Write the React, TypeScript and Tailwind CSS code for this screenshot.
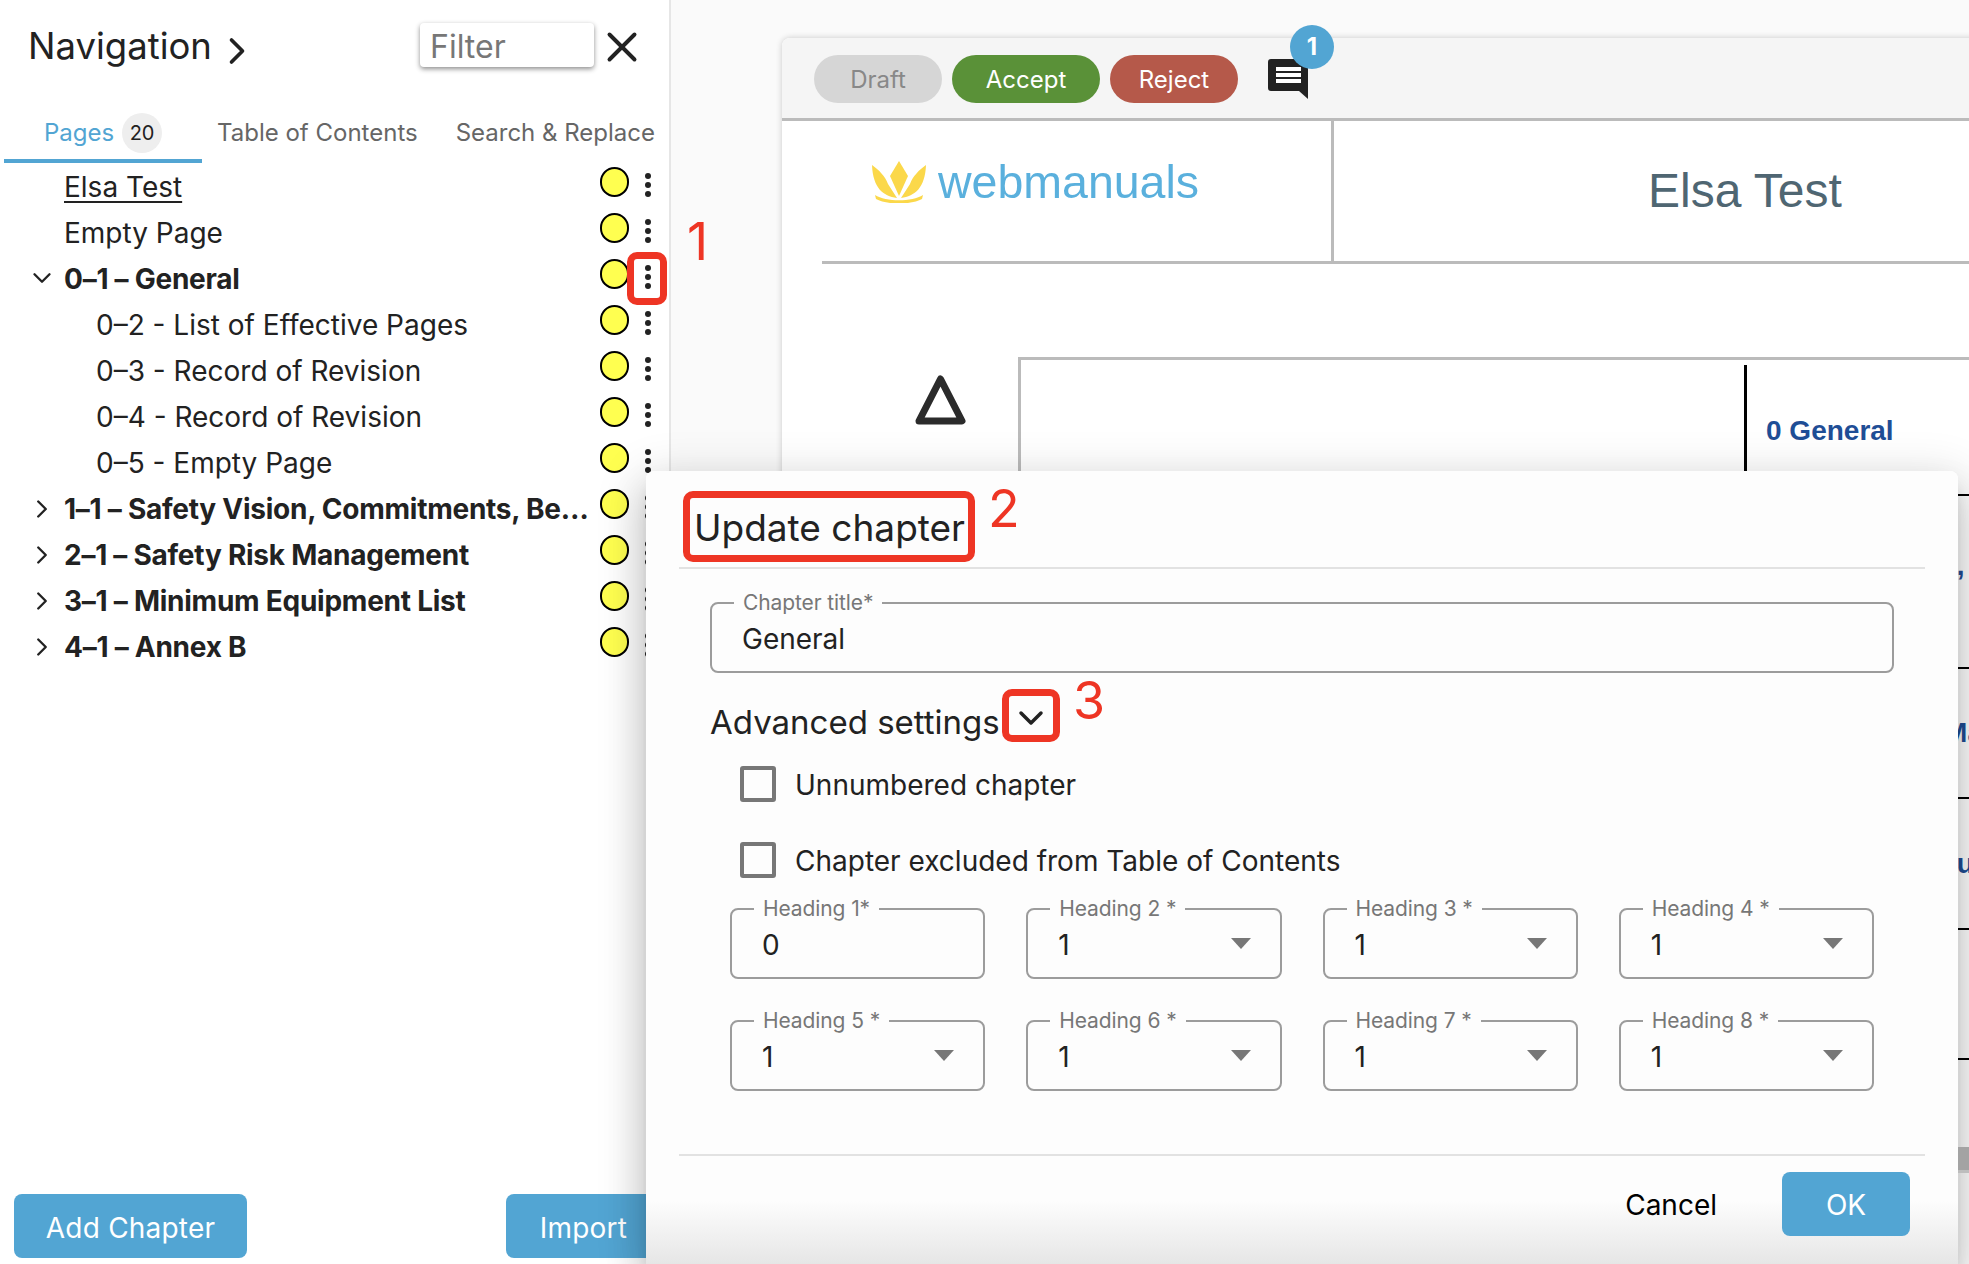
import { ChevronDown, ChevronRight, X } from 'lucide-react';

const pages = [
  { label: 'Elsa Test', level: 0, underline: true },
  { label: 'Empty Page', level: 0 },
  { label: '0–1 – General', level: 0, bold: true, arrow: 'down' },
  { label: '0–2 - List of Effective Pages', level: 1 },
  { label: '0–3 - Record of Revision', level: 1 },
  { label: '0–4 - Record of Revision', level: 1 },
  { label: '0–5 - Empty Page', level: 1 },
  { label: '1–1 – Safety Vision, Commitments, Beliefs and Values', level: 0, bold: true, arrow: 'right' },
  { label: '2–1 – Safety Risk Management', level: 0, bold: true, arrow: 'right' },
  { label: '3–1 – Minimum Equipment List', level: 0, bold: true, arrow: 'right' },
  { label: '4–1 – Annex B', level: 0, bold: true, arrow: 'right' },
];

const headings = ['Heading 1*', 'Heading 2 *', 'Heading 3 *', 'Heading 4 *', 'Heading 5 *', 'Heading 6 *', 'Heading 7 *', 'Heading 8 *'];

function PageRow({ page }: { page: (typeof pages)[number] }) {
  return (
    <div className={`relative flex h-[46px] items-center pr-[18px] ${page.level === 1 ? 'pl-[96px]' : 'pl-[64px]'}`}>
      {page.arrow === 'down' && <ChevronDown size={30} strokeWidth={1.9} className="absolute left-[27px] top-[7px] text-[#222]" />}
      {page.arrow === 'right' && <ChevronRight size={30} strokeWidth={1.9} className="absolute left-[27px] top-[8px] text-[#222]" />}
      <span className={`flex-1 truncate text-[28px] text-[#222] ${page.bold ? 'font-bold tracking-[-0.25px]' : 'font-normal'} ${page.underline ? 'underline underline-offset-4' : ''}`}>
        {page.label}
      </span>
      <span className="mb-[10px] ml-[9px] h-[30px] w-[29px] shrink-0 rounded-full border-2 border-black bg-[#ffff50]" />
      <span className="mb-[4px] ml-[16px] flex shrink-0 flex-col gap-[3px]">
        <span className="h-[6px] w-[6px] rounded-full bg-[#222]" />
        <span className="h-[6px] w-[6px] rounded-full bg-[#222]" />
        <span className="h-[6px] w-[6px] rounded-full bg-[#222]" />
      </span>
    </div>
  );
}

function Sidebar() {
  return (
    <aside className="flex h-full w-[671px] shrink-0 flex-col border-r-2 border-[#e6e6e6] bg-white">
      <div className="mt-[23px] flex h-[44px] items-center pl-[28px] pr-[22px]">
        <span className="mt-[2px] text-[36.5px] leading-none text-[#222]">Navigation</span>
        <ChevronRight size={44} strokeWidth={2} className="ml-[3px] mt-[12px] text-[#222]" />
        <div className="ml-auto flex h-[44px] w-[174px] items-center rounded-[4px] bg-white pl-[10px] pt-[3px] text-[32px] text-[#777] shadow-[0_2px_5px_rgba(0,0,0,0.45)]">Filter</div>
        <X size={50} strokeWidth={1.9} className="ml-[3px] mt-[3px] text-[#222]" />
      </div>

      <div className="mt-[44px] flex h-[52px] items-center text-[24px] text-[#666]">
        <div className="ml-[4px] flex h-full w-[198px] items-center justify-center gap-[8px] border-b-4 border-[#52a5d3] pb-[4px] text-[#52a5d3]">
          Pages
          <span className="flex h-[40px] w-[40px] items-center justify-center rounded-full bg-[#eeeeee] text-[20px] text-[#222]">20</span>
        </div>
        <span className="ml-[15px] pb-[8px]">Table of Contents</span>
        <span className="ml-[38px] whitespace-nowrap pb-[8px]">Search &amp; Replace</span>
      </div>

      <div className="mt-px">
        {pages.map((page) => (
          <PageRow key={page.label} page={page} />
        ))}
      </div>

      <div className="mb-[6px] mt-auto flex pl-[14px]">
        <button className="h-[64px] w-[233px] rounded-[8px] bg-[#52a5d3] pt-[3px] text-[28px] tracking-[0.2px] text-white">Add Chapter</button>
        <button className="ml-[259px] h-[64px] w-[154px] rounded-[8px] bg-[#52a5d3] pl-[1px] pt-[3px] text-[28px] tracking-[0.2px] text-white">Import</button>
      </div>
    </aside>
  );
}

function DocumentCard() {
  return (
    <div className="h-full w-full rounded-tl-[8px] bg-white shadow-[0_0_6px_rgba(0,0,0,0.2)] [font-family:'Liberation_Sans',Arial,sans-serif]">
      <div className="flex h-[83px] items-start rounded-tl-[8px] border-b-[3px] border-[#bbbbbb] bg-[#f5f5f5] pl-[32px] pt-[17px] [font-family:Inter,sans-serif]">
        <span className="flex h-[48px] w-[128px] items-center justify-center rounded-[24px] bg-[#d6d6d6] pt-[2px] text-[24px] text-[#888]">Draft</span>
        <span className="ml-[10px] flex h-[48px] w-[148px] items-center justify-center rounded-[24px] bg-[#5a9138] pt-[2px] text-[24px] text-white">Accept</span>
        <span className="ml-[10px] flex h-[48px] w-[128px] items-center justify-center rounded-[24px] bg-[#b5594a] pt-[2px] text-[24px] text-white">Reject</span>
        <div className="relative ml-[30px] mt-[4px] h-[40px] w-[40px]">
          <svg width="40" height="40" viewBox="0 0 40 40">
            <path d="M3 0H37a3 3 0 0 1 3 3V40L31 32H3a3 3 0 0 1-3-3V3a3 3 0 0 1 3-3Z" fill="#222" />
            <rect x="8" y="8" width="25" height="4" fill="#fff" />
            <rect x="8" y="14" width="25" height="4" fill="#fff" />
            <rect x="8" y="20" width="25" height="4" fill="#fff" />
          </svg>
          <span className="absolute left-[22px] top-[-34px] flex h-[44px] w-[44px] items-center justify-center rounded-full bg-[#52a5d3] text-[24px] font-bold text-white">1</span>
        </div>
      </div>

      <div className="ml-[40px] flex h-[143px] border-b-[3px] border-[#bbbbbb]">
        <div className="flex w-[512px] items-start border-r-[3px] border-[#bbbbbb] pl-[50px] pt-[40px]">
          <svg width="54" height="42" viewBox="0 0 54 42" className="blur-[0.6px]">
            <path d="M27 0L36 15L27 35L18 15Z" fill="#fbd84a" />
            <path d="M0 4C7 9 13 15 16 23L25 37C11 35 1 27 0 4Z" fill="#fbd84a" />
            <path d="M54 4C47 9 41 15 38 23L29 37C43 35 53 27 54 4Z" fill="#fbd84a" />
            <path d="M3 34C14 41 40 41 51 34L50 38C40 44 14 44 4 38Z" fill="#fbd84a" />
          </svg>
          <span className="ml-[12px] mt-[-13px] text-[46.5px] text-[#5ab0dd] blur-[0.6px]">webmanuals</span>
        </div>
        <div className="flex-1 whitespace-nowrap pl-[314px] pt-[44px] text-[48px] leading-[52px] text-[#4f6672]">Elsa Test</div>
      </div>

      <div className="ml-[40px] flex pt-[93px]">
        <div className="w-[196px] shrink-0 pl-[93px] pt-[17px]">
          <svg width="51" height="51" viewBox="0 0 51 51">
            <path d="M25.5 5L47 47H4Z" fill="none" stroke="#2b2b2b" strokeWidth="7" strokeLinejoin="round" />
          </svg>
        </div>
        <div className="flex-1 border-l-[3px] border-t-[3px] border-[#bbbbbb] pt-[5px]">
          <div className="ml-[723px] whitespace-nowrap border-l-[3px] border-black text-[28px] font-bold text-[#1f4e96]">
            <div className="flex h-[129px] items-center pl-[19px] pt-[2px]">0 General</div>
            <div className="flex h-[173px] flex-col justify-center border-t-2 border-black pl-[11px] leading-[32px]">
              <span>1 Safety Vision,</span>
              <span>Commitments</span>
            </div>
            <div className="flex h-[130px] items-center border-t-2 border-black pl-[15px]">2 Safety Risk Management</div>
            <div className="flex h-[131px] items-center border-t-2 border-black pl-[20px]">3 Minimum Equipment List</div>
            <div className="flex h-[130px] items-center border-t-2 border-black" />
            <div className="flex h-[130px] items-center border-t-2 border-black" />
          </div>
        </div>
      </div>
    </div>
  );
}

function Field({ label, value, select }: { label: string; value: string; select?: boolean }) {
  return (
    <div className="relative flex h-[71px] items-center rounded-[8px] border-2 border-[#9c9c9c] pl-[30px] pr-[29px] text-[28px] text-[#222]">
      <span className="absolute left-[22px] top-[-13px] whitespace-nowrap bg-[#fdfdfd] px-[9px] text-[21px] leading-[24px] tracking-[-0.1px] text-[#777]">{label}</span>
      <span className="mt-[2px]">{value}</span>
      {select && (
        <svg width="20" height="11" viewBox="0 0 20 11" className="ml-auto">
          <path d="M0 0H20L10 11Z" fill="#777" />
        </svg>
      )}
    </div>
  );
}

function CheckRow({ label }: { label: string }) {
  return (
    <div className="flex items-center">
      <span className="h-[36px] w-[36px] rounded-[3px] border-4 border-[#777]" />
      <span className="ml-[19px] pt-[3px] text-[28px] text-[#222]">{label}</span>
    </div>
  );
}

function UpdateDialog() {
  return (
    <div className="absolute left-[646px] top-[471px] h-[793px] w-[1312px] rounded-t-[8px] bg-[linear-gradient(to_bottom,#fdfdfd_92%,#e6e6e6_100%)] px-[33px] shadow-[0_11px_15px_-7px_rgba(0,0,0,0.2),0_24px_38px_3px_rgba(0,0,0,0.14),0_9px_46px_8px_rgba(0,0,0,0.12)]">
      <div className="flex h-[98px] items-center border-b-2 border-[#e2e2e2] pl-[15px] pt-[18px] text-[37px] text-[#222]">Update chapter</div>

      <div className="pl-[31px] pr-[31px] pt-[33px]">
        <Field label="Chapter title*" value="General" />
      </div>

      <div className="mt-[29px] flex items-center pl-[31px] text-[33px] leading-[40px] text-[#222]">
        Advanced settings
        <ChevronDown size={40} strokeWidth={2.1} className="-mt-[8px] ml-[11px] text-[#222]" />
      </div>

      <div className="mt-[19px] flex flex-col gap-[31px] pl-[61px]">
        <CheckRow label="Unnumbered chapter" />
        <CheckRow label="Chapter excluded from Table of Contents" />
      </div>

      <div className="mt-[26px] grid grid-cols-4 gap-x-[41px] gap-y-[41px] pl-[51px] pr-[51px]">
        {headings.map((heading, i) => (
          <Field key={heading} label={heading} value={i === 0 ? '0' : '1'} select={i !== 0} />
        ))}
      </div>

      <div className="mt-[63px] flex h-[81px] items-start justify-end border-t-2 border-[#e2e2e2] pr-[15px] pt-[16px]">
        <button className="mr-[65px] h-[64px] pt-[2px] text-[28px] text-black">Cancel</button>
        <button className="h-[64px] w-[128px] rounded-[8px] bg-[#52a5d3] pt-[2px] text-[28px] text-white">OK</button>
      </div>
    </div>
  );
}

export default function App() {
  return (
    <div className="relative flex h-[1264px] w-[1969px] overflow-hidden bg-[#fafafa] [font-family:Inter,sans-serif]">
      <Sidebar />
      <main className="h-full flex-1 pl-[111px] pt-[38px]">
        <DocumentCard />
      </main>

      <UpdateDialog />

      <div className="absolute left-[1958px] top-[1147px] h-[26px] w-[11px] bg-[#bdbdbd]">
        <div className="h-[23px] bg-[#a3a3a3]" />
      </div>

      <div className="absolute left-[627px] top-[252px] h-[53px] w-[40px] rounded-[10px] border-[7px] border-[#ee3524]" />
      <span className="absolute left-[687px] top-[212px] text-[52px] leading-[60px] text-[#ee3524]">1</span>

      <div className="absolute left-[683px] top-[491px] h-[71px] w-[292px] rounded-[10px] border-[7px] border-[#ee3524]" />
      <span className="absolute left-[988px] top-[479px] text-[52px] leading-[60px] text-[#ee3524]">2</span>

      <div className="absolute left-[1002px] top-[689px] h-[53px] w-[58px] rounded-[10px] border-[7px] border-[#ee3524]" />
      <span className="absolute left-[1073px] top-[671px] text-[52px] leading-[60px] text-[#ee3524]">3</span>
    </div>
  );
}
